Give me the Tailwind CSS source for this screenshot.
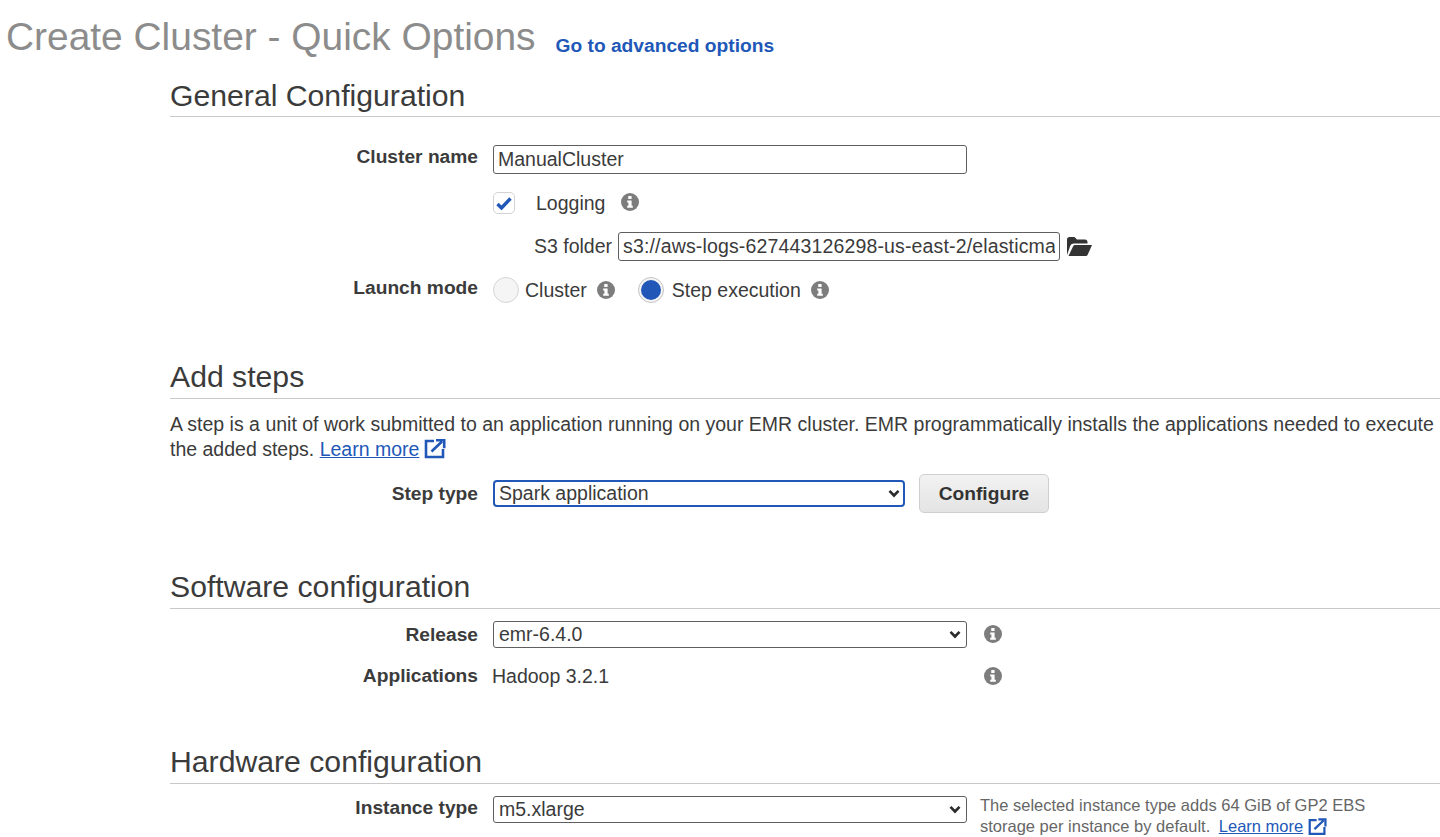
<!DOCTYPE html>
<html lang="en">

<head>
  <meta charset="UTF-8">
  <meta name="viewport" content="width=device-width, initial-scale=1.0">
  <title>Create Cluster - Quick Options</title>
  <script src="https://cdn.jsdelivr.net/npm/@tailwindcss/browser@4"></script>
</head>

<body class="w-[1440px] h-[837px] overflow-hidden bg-white text-[#3b3b3b] font-['Liberation_Sans',sans-serif] text-[19.5px]">
  <svg class="hidden">
    <symbol id="info" viewBox="0 0 18 18">
      <circle cx="9" cy="9" r="9" fill="#7d7d7d" />
      <rect x="7.2" y="3" width="3.4" height="3" rx="0.6" fill="#fff" />
      <path d="M6.2 7.4h4.4v5.4h1.2v2H6.2v-2h1.2V9.4H6.2z" fill="#fff" />
    </symbol>
    <symbol id="external" viewBox="0 0 22 20">
      <path d="M10 2H2v16h17v-8" fill="none" stroke="#2158b8" stroke-width="2.6" />
      <path d="M7.500 12.500 18 2.500M12 1.300h8.200v8" fill="none" stroke="#2158b8" stroke-width="2.600" />
    </symbol>
    <symbol id="chevron" viewBox="0 0 12 9">
      <path d="M1.500 1.800 6 6.500l4.500-4.700" fill="none" stroke="#2b2b2b" stroke-width="2.600" />
    </symbol>
  </svg>

  <!-- Page title -->
  <div class="flex items-baseline h-[74px] pl-[6px] pt-[13px]">
    <h1 class="text-[38.9px] leading-[48px] text-[#8c8c8c]">Create Cluster - Quick Options</h1>
    <a class="ml-[20px] text-[19.2px] font-bold text-[#2158b8] translate-y-[2px]">Go to advanced options</a>
  </div>

  <!-- General Configuration -->
  <section class="ml-[170px]">
    <h2 class="text-[30.2px] leading-[44px] h-[42px] border-b border-[#c9c9c9] box-content">General Configuration</h2>
    <div class="flex h-[29px] mt-[28px]">
      <label class="w-[308px] text-right font-bold text-[19.2px] leading-[24px]">Cluster name</label>
      <input class="ml-[15px] w-[474px] h-[29px] px-[4px] pt-[1px] border border-[#5f5f5f] rounded-[3px] text-[19.5px]" value="ManualCluster">
    </div>
    <div class="flex items-center h-[28px] mt-[15px] pl-[323px]">
      <div class="w-[22px] h-[22px] flex items-center justify-center border border-[#d2d2d2] rounded-[5px] bg-white">
        <svg width="16" height="13" viewBox="0 0 16 13">
          <path d="M1.500 7 5.500 11 14.500 1.500" fill="none" stroke="#2158b8" stroke-width="3.400" />
        </svg>
      </div>
      <span class="ml-[21px] mt-[2px]">Logging</span>
      <svg class="ml-[16px] mb-[3px]" width="18" height="18"><use href="#info" /></svg>
    </div>
    <div class="flex items-center h-[29px] mt-[15px] pl-[364px]">
      <span>S3 folder</span>
      <input class="ml-[6px] w-[442px] h-[29px] px-[4px] border border-[#5f5f5f] rounded-[3px] text-[19.5px] tracking-[0.15px]" value="s3://aws-logs-627443126298-us-east-2/elasticmapreduce/">
      <svg class="ml-[6px]" width="27" height="21" viewBox="0 0 27 21">
        <path d="M1 19V3.500C1 2 2 1 3.500 1h5L11 3.500h8c1.500 0 2.500 1 2.500 2.500v1.500H8c-2 0-3 .8-3.800 2.500z" fill="#333" />
        <path d="M2.500 20 7 10.500c.5-1 1-1.500 2.300-1.500H26L21.800 18.500c-.6 1-1.300 1.500-2.500 1.500z" fill="#333" />
      </svg>
    </div>
    <div class="flex items-center h-[30px] mt-[14px]">
      <label class="w-[308px] text-right font-bold text-[19.2px] mb-[3px]">Launch mode</label>
      <div class="ml-[15px] w-[26px] h-[26px] rounded-full border border-[#d5d5d5] bg-[#f5f5f5]"></div>
      <span class="ml-[6px] mt-[2px]">Cluster</span>
      <svg class="ml-[10px]" width="18" height="18"><use href="#info" /></svg>
      <div class="ml-[23px] w-[26px] h-[26px] rounded-full border border-[#c4c4c4] bg-[#f5f5f5] flex items-center justify-center">
        <div class="w-[20px] h-[20px] rounded-full bg-[#2158b8]"></div>
      </div>
      <span class="ml-[8px] mt-[2px]">Step execution</span>
      <svg class="ml-[10px]" width="18" height="18"><use href="#info" /></svg>
    </div>
  </section>

  <!-- Add steps -->
  <section class="ml-[170px] mt-[51px]">
    <h2 class="text-[30.2px] leading-[42px] h-[42px] border-b border-[#c9c9c9] box-content">Add steps</h2>
    <p class="mt-[13px] leading-[25px] whitespace-nowrap">A step is a unit of work submitted to an application running on your EMR cluster. EMR programmatically installs the applications needed to execute<br>the added steps. <a class="text-[#2158b8] underline">Learn more</a><svg class="inline-block ml-[5px] mb-[3px]" width="22" height="20"><use href="#external" /></svg></p>
    <div class="flex items-center h-[39px] mt-[12px]">
      <label class="w-[308px] mt-[2px] text-right font-bold text-[19.2px]">Step type</label>
      <div class="ml-[15px] w-[412px] h-[27px] flex items-center justify-between pl-[4px] pr-[3px] bg-white border-2 border-[#2158b8] rounded-[4px]">
        <span>Spark application</span>
        <svg width="12" height="9"><use href="#chevron" /></svg>
      </div>
      <button class="ml-[14px] w-[130px] h-[39px] pt-[1px] rounded-[5px] border border-[#cfcfcf] bg-linear-to-b from-[#f2f2f2] to-[#e4e4e4] font-bold text-[19.2px] text-[#333]">Configure</button>
    </div>
  </section>

  <!-- Software configuration -->
  <section class="ml-[170px] mt-[53px]">
    <h2 class="text-[30.2px] leading-[42px] h-[42px] border-b border-[#c9c9c9] box-content">Software configuration</h2>
    <div class="flex items-center h-[27px] mt-[12px]">
      <label class="w-[308px] mt-[1px] text-right font-bold text-[19.2px]">Release</label>
      <div class="ml-[15px] w-[474px] h-[27px] flex items-center justify-between pl-[5px] pr-[5px] bg-white border border-[#5f5f5f] rounded-[3px]">
        <span>emr-6.4.0</span>
        <svg width="12" height="9"><use href="#chevron" /></svg>
      </div>
      <svg class="ml-[17px] mb-[2px]" width="18" height="18"><use href="#info" /></svg>
    </div>
    <div class="flex items-center h-[27px] mt-[15px]">
      <label class="w-[308px] text-right font-bold text-[19.2px]">Applications</label>
      <span class="ml-[14px] w-[475px]">Hadoop 3.2.1</span>
      <svg class="ml-[17px] mb-[2px]" width="18" height="18"><use href="#info" /></svg>
    </div>
  </section>

  <!-- Hardware configuration -->
  <section class="ml-[170px] mt-[51px]">
    <h2 class="text-[30.2px] leading-[42px] h-[42px] border-b border-[#c9c9c9] box-content">Hardware configuration</h2>
    <div class="flex h-[27px] mt-[12px]">
      <label class="w-[308px] -mt-[2px] text-right font-bold text-[19.2px]">Instance type</label>
      <div class="ml-[15px] w-[474px] h-[27px] flex items-center justify-between pl-[5px] pr-[5px] bg-white border border-[#5f5f5f] rounded-[3px]">
        <span>m5.xlarge</span>
        <svg width="12" height="9"><use href="#chevron" /></svg>
      </div>
      <p class="ml-[13px] -mt-[1px] text-[16.5px] leading-[21px] text-[#666] whitespace-nowrap">The selected instance type adds 64 GiB of GP2 EBS<br>storage per instance by default. <a class="ml-[4px] text-[#2158b8] underline">Learn more</a><svg class="inline-block ml-[5px] mb-[2px]" width="19" height="18"><use href="#external" /></svg></p>
    </div>
  </section>
</body>

</html>
